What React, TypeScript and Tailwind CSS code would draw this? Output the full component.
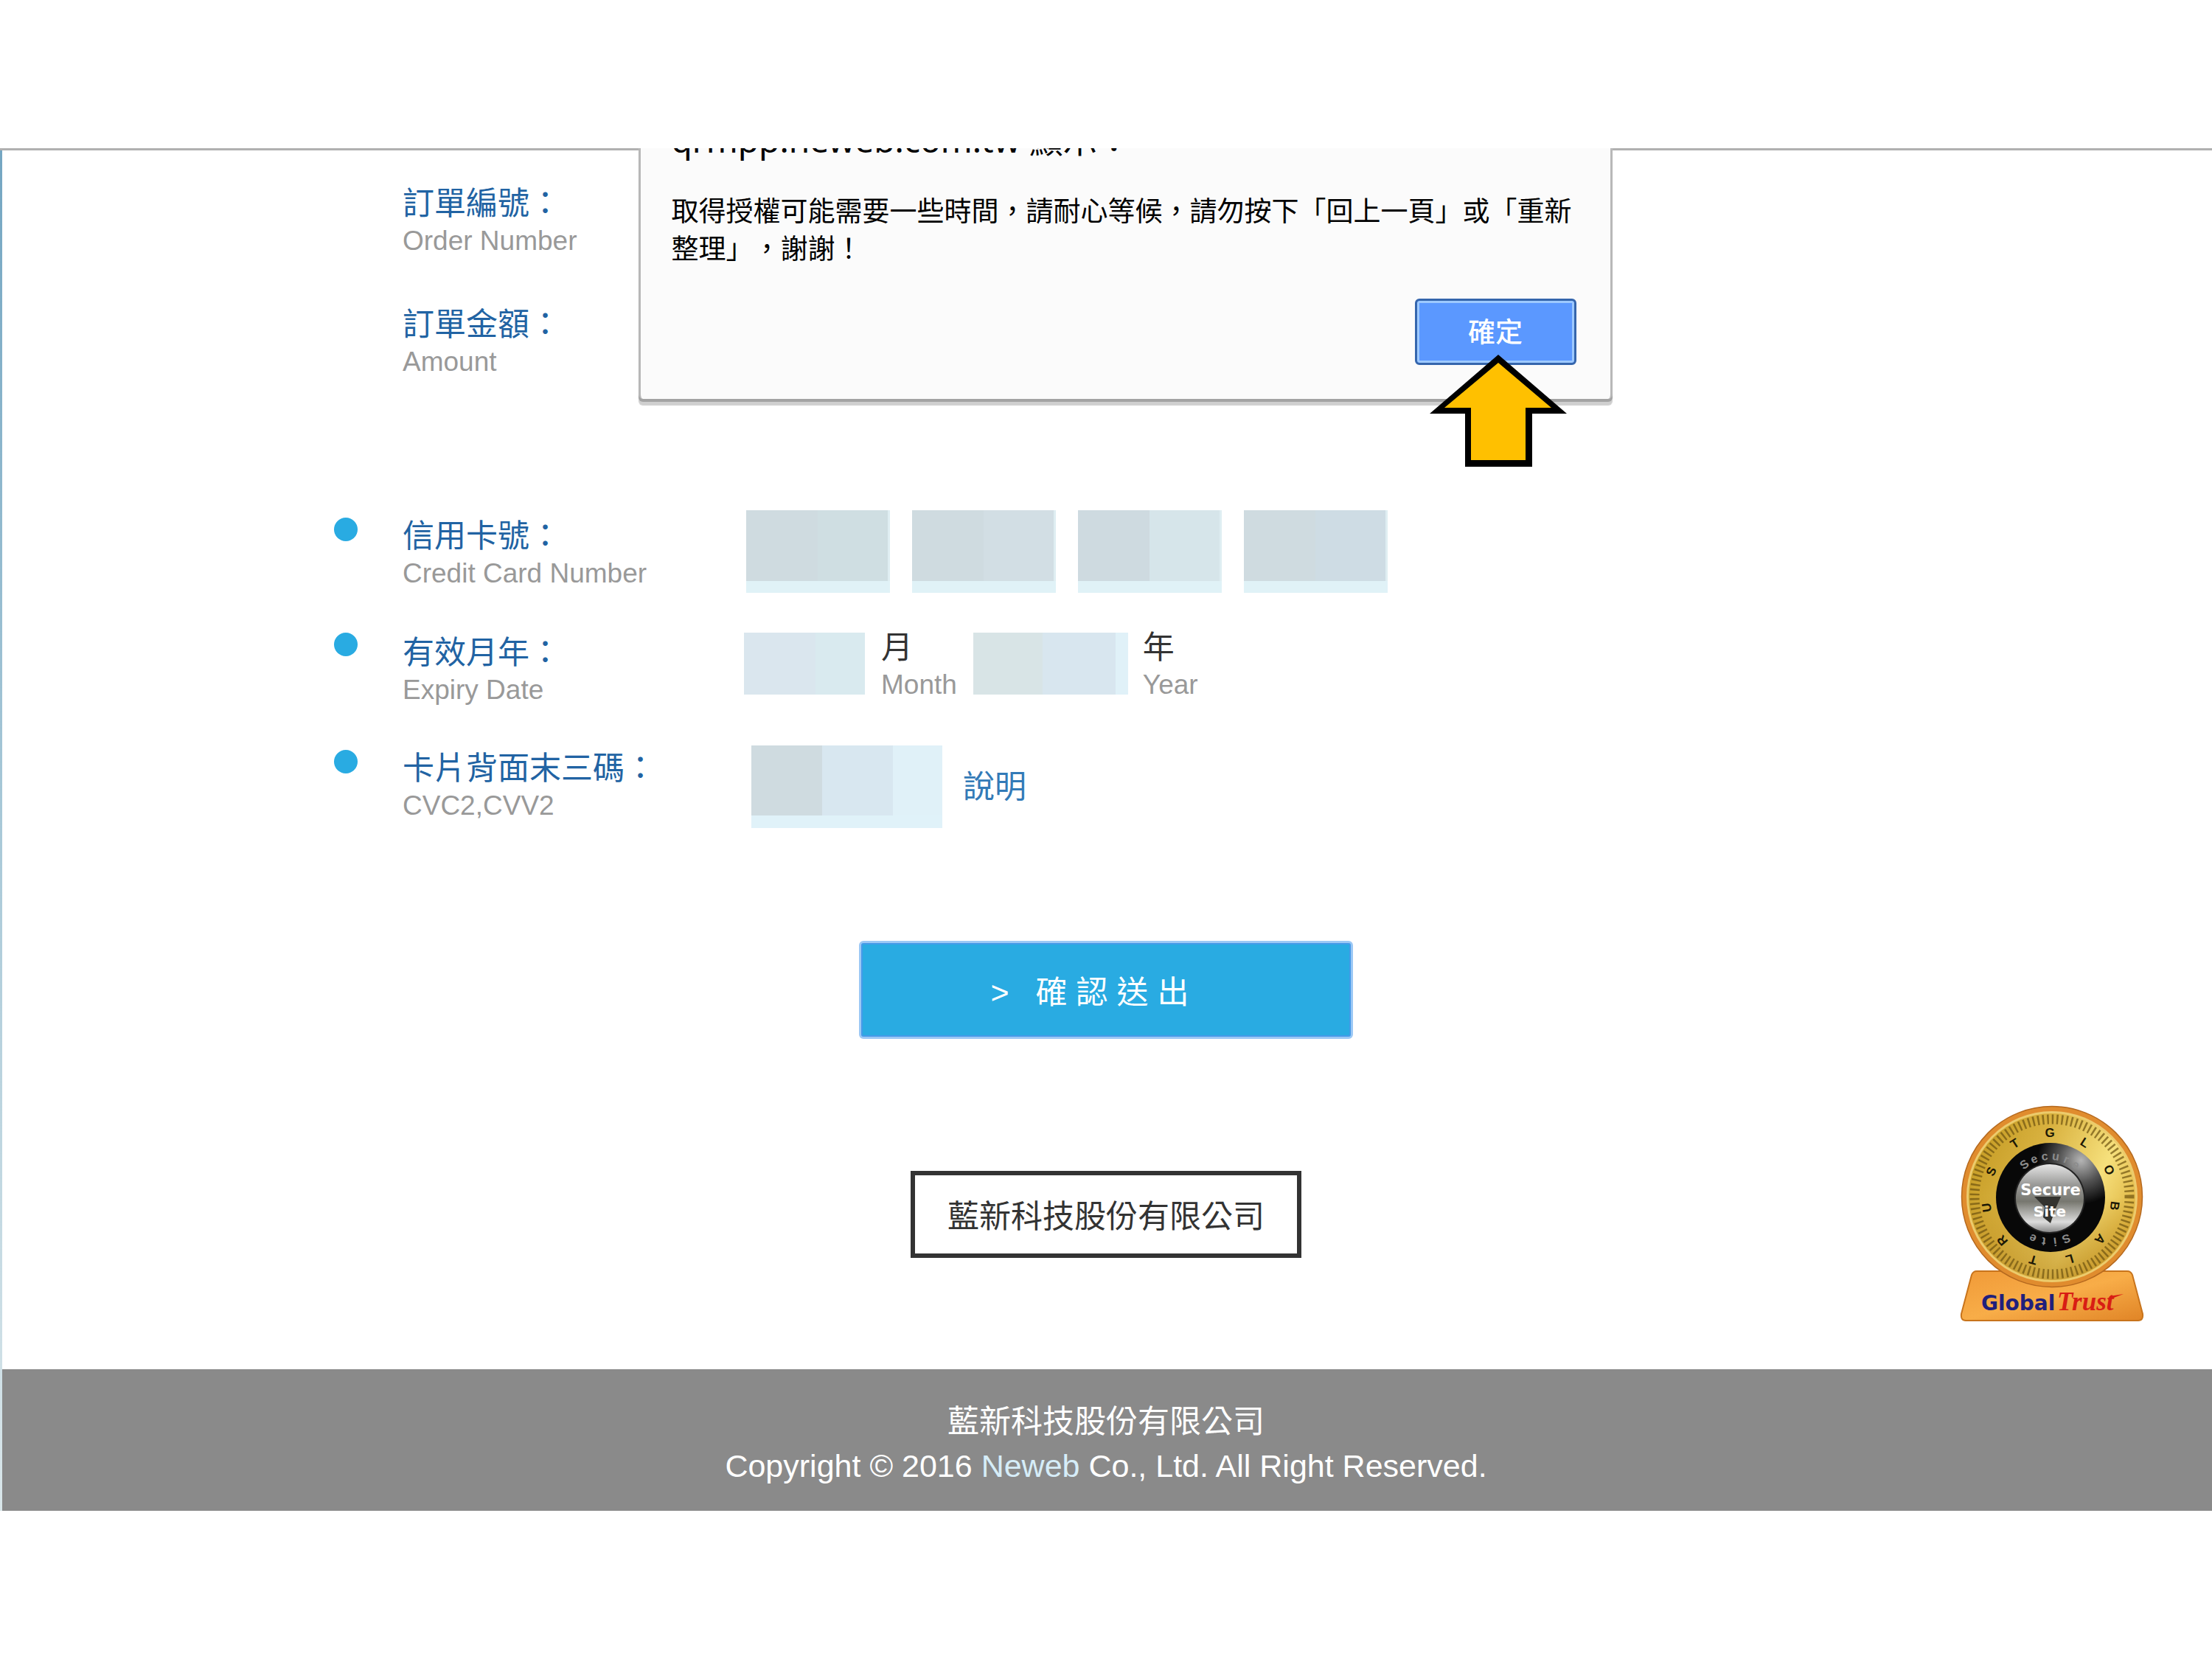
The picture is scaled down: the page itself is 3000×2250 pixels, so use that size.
import { useState } from "react";

const labelZh = "text-[43px] leading-[54px]";
const labelEn = "text-[37px] leading-12 text-[#999999]";

// 遮罩後的卡號欄位
const cardFields = [
  {
    id: "card1",
    className:
      "[background-image:linear-gradient(to_bottom,transparent_96px,#e0f2f7_96px),linear-gradient(to_right,#cfdbe0_97px,#cfdee2_97px,#cfdee2_192px,#dfeef2_192px)]",
  },
  {
    id: "card2",
    className:
      "[background-image:linear-gradient(to_bottom,transparent_96px,#e0f2f7_96px),linear-gradient(to_right,#cfdbe0_97px,#d2dee4_97px,#d2dee4_192px,#dfeef2_192px)]",
  },
  {
    id: "card3",
    className:
      "[background-image:linear-gradient(to_bottom,transparent_96px,#e0f2f7_96px),linear-gradient(to_right,#cedae0_97px,#d6e5ea_97px,#d6e5ea_192px,#dfeef2_192px)]",
  },
  {
    id: "card4",
    className:
      "[background-image:linear-gradient(to_bottom,transparent_96px,#e0f2f7_96px),linear-gradient(to_right,#cfdbe0_97px,#cedce4_97px,#cedce4_192px,#dfeef2_192px)]",
  },
];

function Dot() {
  return <span className="block size-8 rounded-full bg-[#29abe2]" />;
}

function FieldLabel({ zh, en, htmlFor }: { zh: string; en: string; htmlFor?: string }) {
  return (
    <label htmlFor={htmlFor} className="block whitespace-nowrap">
      <span className={`block text-[#2163a3] ${labelZh}`}>{zh}</span>
      <span className={`block ${labelEn}`}>{en}</span>
    </label>
  );
}

function AlertDialog({ onClose }: { onClose: () => void }) {
  return (
    <div className="absolute inset-x-0 -top-11 flex justify-center pl-[52px]">
      <div
        role="alertdialog"
        aria-labelledby="alert-title"
        aria-describedby="alert-text"
        className="relative w-full max-w-[1321px] rounded-b-md border-x-3 border-[#b8b8b8] bg-[#fbfbfb] px-[42px] pb-[46px] text-black [font-family:'Noto_Sans','Noto_Sans_CJK_TC',sans-serif] shadow-[0_4px_0_#a3a3a3,0_9px_1px_#cfcfcf]"
      >
        <h2 id="alert-title" className="text-[46px] leading-[64px]">
          qrmpp.neweb.com.tw 顯示：
        </h2>
        <p
          id="alert-text"
          className="mt-[39px] w-[1230px] text-[37px] leading-[51px] [text-spacing-trim:space-all]"
        >
          取得授權可能需要一些時間，請耐心等候，請勿按下「回上一頁」或「重新整理」，謝謝！
        </p>
        <div className="mt-[43px] flex justify-end pr-1">
          <button
            type="button"
            onClick={onClose}
            className="h-[90px] w-[219px] rounded-md border-3 border-[#3566ad] bg-[#5b98ff] text-[37px] font-medium text-white inset-ring-3 inset-ring-[#9dc9ff]"
          >
            確定
          </button>
        </div>
        {/* 指向確定按鈕的箭頭 */}
        <svg
          viewBox="0 0 186 152"
          className="absolute right-[59px] -bottom-[92px] h-[152px] w-[186px]"
          aria-hidden="true"
        >
          <path d="M93 0L186 80H139V152H48V80H0Z" fill="#000" />
          <path d="M93 11L165 72H130V143H56V72H20Z" fill="#ffc000" />
        </svg>
      </div>
    </div>
  );
}

function GlobalTrustSeal() {
  const letters = ["G", "L", "O", "B", "A", "L", "T", "R", "U", "S", "T"];
  return (
    <svg
      viewBox="0 0 248 292"
      className="h-[292px] w-[248px] overflow-visible"
      role="img"
      aria-label="GlobalTrust"
    >
      <defs>
        <linearGradient id="gold" x1="0" y1="0.2" x2="1" y2="0.7">
          <stop offset="0" stopColor="#c49a22" />
          <stop offset="0.35" stopColor="#d9b240" />
          <stop offset="0.7" stopColor="#f6e07c" />
          <stop offset="1" stopColor="#dcae38" />
        </linearGradient>
        <linearGradient id="lower" x1="0" y1="0" x2="0" y2="1">
          <stop offset="0.5" stopColor="#b07c10" stopOpacity="0" />
          <stop offset="1" stopColor="#b07c10" stopOpacity="0.6" />
        </linearGradient>
        <linearGradient id="base" x1="0" y1="0" x2="1" y2="1">
          <stop offset="0" stopColor="#f09a38" />
          <stop offset="0.5" stopColor="#f8ad48" />
          <stop offset="1" stopColor="#e08426" />
        </linearGradient>
        <radialGradient id="knob" cx="0.78" cy="0.16" r="0.4">
          <stop offset="0" stopColor="#b5b5b5" />
          <stop offset="0.5" stopColor="#555555" />
          <stop offset="1" stopColor="#080808" />
        </radialGradient>
        <linearGradient id="silver" x1="0" y1="0" x2="0" y2="1">
          <stop offset="0" stopColor="#e6e6e6" />
          <stop offset="0.3" stopColor="#9a9a98" />
          <stop offset="0.55" stopColor="#77776f" />
          <stop offset="0.85" stopColor="#dcdcdc" />
          <stop offset="1" stopColor="#8a8a8a" />
        </linearGradient>
      </defs>
      <path
        d="M22 223H226Q231 223 233 228L247 281Q248 290 241 290H7Q0 290 1 281L15 228Q17 223 22 223Z"
        fill="url(#base)"
        stroke="#c8741c"
        strokeWidth="2"
      />
      <circle cx="124" cy="122" r="122.5" fill="#e08c2e" stroke="#b5691f" strokeWidth="1.5" />
      <circle cx="124" cy="122" r="116" fill="#eccb6c" />
      <circle cx="124" cy="122" r="113" fill="url(#gold)" />
      <circle cx="124" cy="122" r="113" fill="url(#lower)" />
      <circle
        cx="124"
        cy="122"
        r="105"
        fill="none"
        stroke="#6d5310"
        strokeOpacity="0.7"
        strokeWidth="13"
        strokeDasharray="2.5 4"
      />
      <g
        fill="#1c1806"
        fontFamily="Liberation Sans, sans-serif"
        fontSize="17"
        fontWeight="700"
        textAnchor="middle"
      >
        {letters.map((letter, i) => (
          <text key={i} x="121" y="41" transform={`rotate(${i * 32.7} 122 123)`}>
            {letter}
          </text>
        ))}
      </g>
      <circle cx="122" cy="123" r="74" fill="url(#knob)" />
      <g
        fill="#8c8c8c"
        fontFamily="Liberation Sans, sans-serif"
        fontSize="16"
        fontWeight="700"
        textAnchor="middle"
      >
        {"Secure".split("").map((letter, i) => (
          <text key={i} x="121" y="72" transform={`rotate(${-37 + i * 15} 121 124)`}>
            {letter}
          </text>
        ))}
        {"Site".split("").map((letter, i) => (
          <text key={i} x="121" y="70" transform={`rotate(${158 + i * 15} 121 124)`}>
            {letter}
          </text>
        ))}
      </g>
      <circle cx="121" cy="124" r="48" fill="#222222" />
      <circle cx="121" cy="124" r="46" fill="url(#silver)" />
      <path d="M100 122H136L128 140L122 158L112 150L114 136Z" fill="#33332f" />
      <g fill="#ffffff" fontFamily="DejaVu Sans, sans-serif" fontWeight="700" textAnchor="middle">
        <text x="122" y="120" fontSize="21">
          Secure
        </text>
        <text x="121" y="149" fontSize="20">
          Site
        </text>
      </g>
      <text
        x="28"
        y="276"
        fill="#20207c"
        fontFamily="DejaVu Sans, sans-serif"
        fontSize="28"
        fontWeight="700"
      >
        Global
      </text>
      <text
        x="131"
        y="276"
        fill="#d81e14"
        fontFamily="Liberation Serif, serif"
        fontSize="35"
        fontStyle="italic"
        fontWeight="700"
      >
        Trust
      </text>
      <path d="M202 257L221 254L200 262Z" fill="#d81e14" />
    </svg>
  );
}

export default function App() {
  const [showAlert, setShowAlert] = useState(true);

  return (
    <div className="bg-white pt-[201px] text-[#333333] [font-family:'Liberation_Sans','Noto_Sans_CJK_TC',sans-serif]">
      <div className="relative overflow-hidden">
        <div className="h-[3px] bg-[#b0b0b0]" />
        <div className="bg-[linear-gradient(to_bottom,#74a6c2,#a9c9d8_50%,#d9e6ea)] pl-[3px]">
          <main className="relative bg-white pt-[45px] pr-[3px] pb-[151px]">
            <form
              className="mx-auto flex w-full max-w-[2094px] flex-col"
              onSubmit={(e) => {
                e.preventDefault();
                setShowAlert(true);
              }}
            >
              <div className="grid gap-[62px] pl-[93px]">
                <FieldLabel zh="訂單編號：" en="Order Number" />
                <FieldLabel zh="訂單金額：" en="Amount" />
              </div>

              {/* 信用卡號 */}
              <div className="mt-[177px] grid grid-cols-[93px_466px_1fr] items-start">
                <div className="pt-[10px]">
                  <Dot />
                </div>
                <div className="pt-2">
                  <FieldLabel zh="信用卡號：" en="Credit Card Number" htmlFor="card1" />
                </div>
                <div className="flex gap-[30px]">
                  {cardFields.map((field) => (
                    <input
                      key={field.id}
                      id={field.id}
                      type="text"
                      maxLength={4}
                      aria-label="信用卡號"
                      className={`h-28 w-[195px] ${field.className}`}
                    />
                  ))}
                </div>
              </div>

              {/* 有效月年 */}
              <div className="mt-[54px] grid grid-cols-[93px_463px_1fr] items-start">
                <Dot />
                <FieldLabel zh="有效月年：" en="Expiry Date" htmlFor="month" />
                <div className="flex items-start">
                  <select
                    id="month"
                    aria-label="月"
                    className="h-[84px] w-[164px] appearance-none [background-image:linear-gradient(to_right,#dae6ee_97px,#d9eaef_97px)]"
                  >
                    <option value=""></option>
                  </select>
                  <label htmlFor="month" className="-mt-[7px] px-[22px]">
                    <span className={`block ${labelZh}`}>月</span>
                    <span className={`block ${labelEn}`}>Month</span>
                  </label>
                  <select
                    id="year"
                    aria-label="年"
                    className="h-[84px] w-[210px] appearance-none [background-image:linear-gradient(to_right,#d8e4e6_94px,#d8e6ef_94px,#d8e6ef_193px,#e0f1f8_193px)]"
                  >
                    <option value=""></option>
                  </select>
                  <label htmlFor="year" className="-mt-[7px] pl-5">
                    <span className={`block ${labelZh}`}>年</span>
                    <span className={`block ${labelEn}`}>Year</span>
                  </label>
                </div>
              </div>

              {/* 卡片背面末三碼 */}
              <div className="mt-[51px] grid grid-cols-[93px_473px_1fr] items-start">
                <div className="pt-[6px]">
                  <Dot />
                </div>
                <div className="pt-1">
                  <FieldLabel zh="卡片背面末三碼：" en="CVC2,CVV2" htmlFor="cvv" />
                </div>
                <div className="flex items-center gap-7">
                  <input
                    id="cvv"
                    type="text"
                    maxLength={3}
                    className="h-28 w-[259px] [background-image:linear-gradient(to_bottom,transparent_95px,#e0f2f9_95px),linear-gradient(to_right,#cfdbe0_96px,#d8e7f0_96px,#d8e7f0_192px,#e0f1f8_192px)]"
                  />
                  <a href="#" className={`text-[#337ab7] ${labelZh}`}>
                    說明
                  </a>
                </div>
              </div>

              <button
                type="submit"
                className="mx-auto mt-[153px] h-[133px] w-[670px] rounded-md border-3 border-[#9cc8f5] bg-[#29abe2] pt-2 pr-[44px] text-[43px] whitespace-pre text-white inset-ring-2 inset-ring-[#459ae8]"
              >
                {">   確 認 送 出"}
              </button>
            </form>

            <div className="mt-[179px] flex justify-center">
              <div className="border-6 border-[#333333] px-[44px] pt-[29px] pb-[23px] text-[43px] leading-[54px]">
                藍新科技股份有限公司
              </div>
            </div>

            <div className="absolute right-[93px] bottom-[64px]">
              <GlobalTrustSeal />
            </div>
          </main>

          <footer className="bg-[#8a8a8a] pt-[41px] pr-[3px] pb-[31px] text-center text-[43px] leading-[60px] text-white">
            <p>藍新科技股份有限公司</p>
            <p>
              Copyright © 2016{" "}
              <a href="#" className="text-[#d6edf8]">
                Neweb
              </a>{" "}
              Co., Ltd. All Right Reserved.
            </p>
          </footer>
        </div>

        {showAlert && <AlertDialog onClose={() => setShowAlert(false)} />}
      </div>
    </div>
  );
}
